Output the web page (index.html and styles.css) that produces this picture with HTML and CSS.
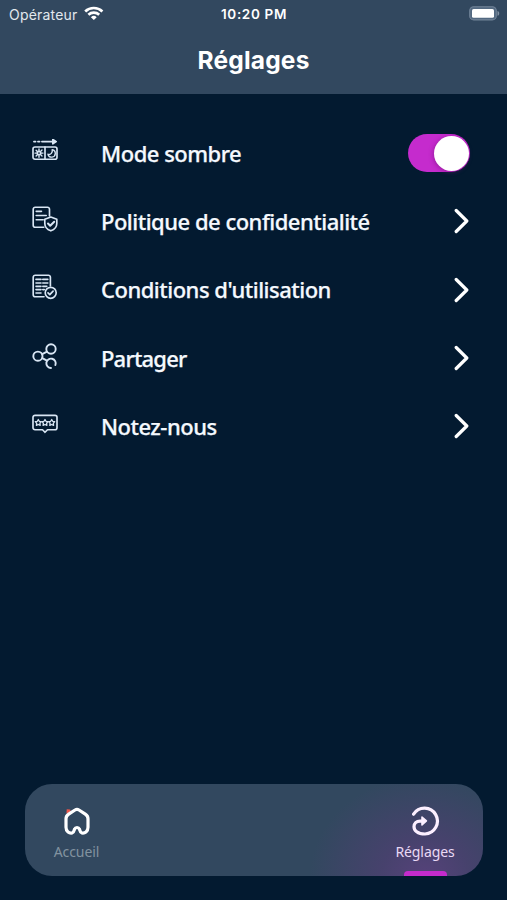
FILE: index.html
```html
<!DOCTYPE html>
<html lang="fr">
<head>
<meta charset="utf-8">
<title>Réglages</title>
<link rel="stylesheet" href="styles.css">
</head>
<body>
<div class="app">
  <header class="header">
    <div class="status">
      <div class="carrier"><span>Opérateur</span>
        <svg width="20" height="15" viewBox="0 0 20 15" fill="none" stroke="#fff" stroke-width="2.7"><path d="M1.2 5.4a12.6 12.6 0 0 1 17.2 0M4.4 8.8a8 8 0 0 1 10.8 0"/><path d="M9.8 14.1 6.9 11.2a4.2 4.2 0 0 1 5.8 0z" fill="#fff" stroke="none"/></svg>
      </div>
      <span class="clock">10:20 PM</span>
      <svg class="battery" width="31" height="15" viewBox="0 0 31 15"><rect x=".7" y=".7" width="26.6" height="13.2" rx="4" fill="#536981" stroke="#718398" stroke-width="1.1"/><rect x="3" y="3" width="22" height="8.8" rx="1.6" fill="#fff"/><path d="M28.5 5c2.3.6 2.3 4.2 0 4.8z" fill="#8291a3"/></svg>
    </div>
    <h1 class="title">Réglages</h1>
  </header>
  <main class="list">
    <div class="row">
      <svg class="icon mode" viewBox="0 0 26 26"><path d="M2 2.6h1.5M6 2.6h1.5M10 2.6h13" stroke-width="1.9"/><path d="m20.8.4 3.4 2.2-3.4 2.2z" fill="#d9e6f4"/><rect x="1" y="8" width="24" height="12.2" rx="2"/><path d="M13 8v12.2"/><circle cx="7" cy="14.1" r="1.7"/><path d="M7 10v1.5M7 16.7v1.6M3 14.1h1.5M9.5 14.1H11M4.1 11.2l1 1M9 16.1l1 1M4.1 17.1l1-1M9 12.1l1-1M20.2 10.8a3.7 3.7 0 1 1-4.2 4.5c2.7.8 4.8-1.8 4.2-4.5z" stroke-width="1.4"/></svg>
      <span class="label">Mode sombre</span>
      <span class="toggle"><span class="knob"></span></span>
    </div>
    <div class="row">
      <svg class="icon" viewBox="0 0 26 26"><path d="M17.5 10V3.2a2 2 0 0 0-2-2H3.2a2 2 0 0 0-2 2v16a2 2 0 0 0 2 2h8.6M4.2 5.3h5.3M4.2 9.5h10M4.2 13.7h7"/><path d="m18.8 11 6 2.2v4.2c0 3.8-2.7 6.1-6 7.4-3.3-1.3-6-3.6-6-7.4v-4.2z"/><path d="m16 17.5 2.2 2.3 4-4.1" stroke-width="2"/></svg>
      <span class="label">Politique de confidentialité</span>
      <svg class="chevron" viewBox="0 0 15 26"><path d="m2.2 2.5 10.6 10.5L2.2 23.5"/></svg>
    </div>
    <div class="row">
      <svg class="icon" viewBox="0 0 26 26"><path d="M18.4 12V3.2a2 2 0 0 0-2-2H3.2a2 2 0 0 0-2 2v17.5a2 2 0 0 0 2 2H12M4 5.4h5M10.8 5.4h5M4 9h5M10.8 9h5M4 12.3h5M10.8 12.3h4M4 15.6h5M4 19h5M10.8 15.6h1.5"/><circle cx="18.7" cy="18.8" r="5.5"/><path d="m16 18.8 1.8 1.8 3.3-3.4" stroke-width="1.7"/></svg>
      <span class="label">Conditions d'utilisation</span>
      <svg class="chevron" viewBox="0 0 15 26"><path d="m2.2 2.5 10.6 10.5L2.2 23.5"/></svg>
    </div>
    <div class="row">
      <svg class="icon share" viewBox="0 0 26 26"><circle cx="5.9" cy="13.2" r="4.6"/><circle cx="19" cy="6" r="4.7"/><path d="M10.2 11.2 15 8.7M10.2 15.2l4.8 2.5M19 25a4.7 4.7 0 1 1 4.4-3"/></svg>
      <span class="label tight">Partager</span>
      <svg class="chevron" viewBox="0 0 15 26"><path d="m2.2 2.5 10.6 10.5L2.2 23.5"/></svg>
    </div>
    <div class="row">
      <svg class="icon" viewBox="0 0 26 26"><path d="M3 4.3h20a2 2 0 0 1 2 2v10.4a2 2 0 0 1-2 2h-7.5L13 21.3l-2.5-2.6H3a2 2 0 0 1-2-2V6.3a2 2 0 0 1 2-2z"/><g stroke-width="1.3"><path id="star" d="m6.3 8.5 1 1.8 2 .3-1.4 1.6.3 2.2-1.9-.9-1.9.9.3-2.2-1.4-1.6 2-.3z"/><use href="#star" x="6.7"/><use href="#star" x="13.4"/></g></svg>
      <span class="label">Notez-nous</span>
      <svg class="chevron" viewBox="0 0 15 26"><path d="m2.2 2.5 10.6 10.5L2.2 23.5"/></svg>
    </div>
  </main>
  <nav class="tabs">
    <div class="tab home">
      <svg width="30" height="30" viewBox="0 0 30 30"><path d="m4.5 7.5.2-4.2 3.4.2.8 2z" fill="#ee574b"/><path d="M13 4a3.8 3.8 0 0 1 4 0l6.3 4.2c1.8 1.2 2.7 2.5 2.7 4.6v8.4c0 4.4-3.3 6.3-6.2 5.7-2-.5-1.8-2.6-2.4-3.9-.8-2-4-2-4.8 0-.6 1.3-.4 3.4-2.4 3.9-2.9.6-6.2-1.3-6.2-5.7v-8.4c0-2.1.9-3.4 2.7-4.6z" fill="none" stroke="#fff" stroke-width="3.2"/></svg>
      <span>Accueil</span>
    </div>
    <div class="tab active">
      <svg width="30" height="30" viewBox="0 0 30 30" fill="none" stroke="#fcefff" stroke-width="3.2" stroke-linecap="round"><path d="M3.6 8.2A12.9 12.9 0 1 1 15 28C7.5 28 4 24.4 4 20.7c0-3.2 2.4-5.6 6-5.6h3"/><path d="m12 11 4.4 3.9-4.4 4z" fill="#fcefff" stroke-width="1.6" stroke-linejoin="round"/></svg>
      <span>Réglages</span>
    </div>
  </nav>
</div>
</body>
</html>
```
FILE: styles.css
```css
* { box-sizing: border-box; }
body { margin: 0; background: #031a30; color: #fff; font-family: "Noto Sans", sans-serif; }
.app { width: 507px; height: 900px; display: flex; flex-direction: column; overflow: hidden; }
.header { height: 94px; flex: none; background: #32485f; font-family: Inter, sans-serif; }
.status { height: 28px; padding: 0 7px 0 9px; display: grid; grid-template-columns: 1fr auto 1fr; align-items: center; font-size: 14px; }
.carrier { display: flex; align-items: center; gap: 6px; color: #e2e8ee; letter-spacing: .2px; }
.carrier svg { margin-top: -2px; }
.clock { font-weight: 600; font-size: 13.5px; letter-spacing: .65px; margin-right: 1px; }
.battery { justify-self: end; margin-top: -1px; }
.title { margin: 15px 0 0; font-size: 24.5px; line-height: 34px; letter-spacing: .2px; font-weight: 700; text-align: center; }
.list { flex: 1; padding-top: 25px; }
.row { height: 68.3px; padding: 0 37px 0 32px; display: flex; align-items: center; }
.icon { width: 26px; height: 26px; flex: none; margin: -5px 43px 0 0; fill: none; stroke: #d9e6f4; stroke-width: 1.65; stroke-linecap: round; stroke-linejoin: round; }
.mode { margin-top: -2px; }
.share { stroke-width: 1.9; }
.label { flex: 1; white-space: nowrap; font-size: 22px; line-height: 30px; font-weight: 500; letter-spacing: -.5px; -webkit-text-stroke: .25px #f5f9fe; color: #f5f9fe; margin-top: -1px; }
.tight { letter-spacing: -.8px; }
.chevron { width: 15px; height: 26px; margin: 0 1.5px 0 0; fill: none; stroke: #fff; stroke-width: 3.2; stroke-linecap: round; stroke-linejoin: round; }
.toggle { width: 62px; height: 38px; padding: 1px; border-radius: 19px; background: #c52bcd; display: flex; justify-content: flex-end; align-items: center; }
.knob { width: 35px; height: 35px; border-radius: 50%; background: #fff; box-shadow: -1px 1px 4px #75107b80; }
.tabs { height: 92px; margin: 0 24.5px 24px 25px; padding: 0 14px 0 8px; border-radius: 27px; display: flex; justify-content: space-between; overflow: hidden; background: radial-gradient(ellipse 115px 100px at 400px 92px, #56427a 0%, #503f73b0 38%, #32485f00 100%), #32485f; }
.tab { width: 87px; padding-top: 22px; display: flex; flex-direction: column; align-items: center; font-size: 14px; line-height: 20px; letter-spacing: -.1px; color: #8293a0; }
.tab span { margin-top: 6px; }
.active { color: #ead9f5; }
.active::after { content: ""; width: 43px; height: 5px; margin-top: 9px; border-radius: 4px 4px 0 0; background: #c52bcd; }
```
